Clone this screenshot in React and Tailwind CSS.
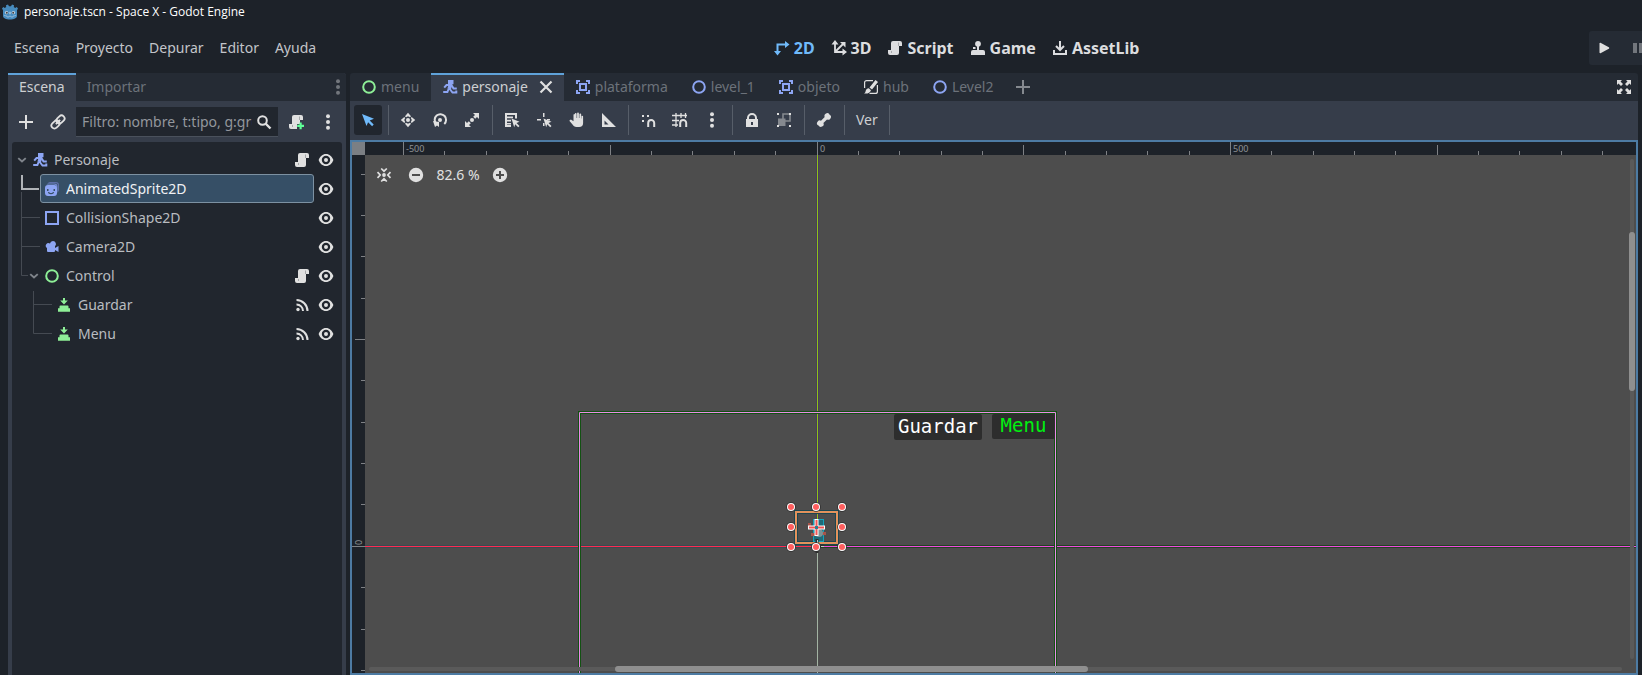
import React from "react";

function Icon({ children, className = "", size = 16 }) {
  return (
    <svg
      width={size}
      height={size}
      viewBox="0 0 16 16"
      fill="currentColor"
      aria-hidden="true"
      className={"block shrink-0 " + className}
    >
      {children}
    </svg>
  );
}

const S = { fill: "none", stroke: "currentColor", strokeWidth: 2 };

const Body = () => (
  <Icon className="text-[#8da5f3]">
    <path d="M6 1h5.500v4.200H6z" />
    <path d="M8.800 4.500L7.200 10" {...S} strokeWidth="3.600" />
    <path d="M8 6H4.500L2.200 8.600M9.500 6.200l2 3.200h3.300M6.800 9.500L5.400 13H1.200M7.800 10l2.700 3.500h3.800v-2" {...S} />
  </Icon>
);
const Sprite = () => (
  <Icon>
    <path d="M6 1h6a3 3 0 0 1 3 3v5a3 3 0 0 1-1 2V5a3 3 0 0 0-3-3H4a3 3 0 0 1 2-1z" fill="#5f6fa8" />
    <path d="M4 2.500h6.500a3 3 0 0 1 3 3V11l-1 1.500V6.500a3 3 0 0 0-3-3H2.500A3 3 0 0 1 4 2.500z" fill="#7288cc" />
    <path
      fillRule="evenodd"
      fill="#8da5f3"
      d="M4 4h6a3 3 0 0 1 3 3v5a3 3 0 0 1-3 3H4a3 3 0 0 1-3-3V7a3 3 0 0 1 3-3zM3 8v2h1.500V8zm6.500 0v2H11V8zM4 11c0 1.500 1.500 2.200 3 2.200s3-.7 3-2.200H8.800c0 .8-.8 1-1.800 1s-1.800-.2-1.800-1z"
    />
  </Icon>
);
const Shape = () => (
  <Icon className="text-[#8da5f3]">
    <path d="M2 2h12v12H2z" {...S} />
  </Icon>
);
const Camera = () => (
  <Icon className="text-[#8da5f3]">
    <path d="M9 2a3 3 0 0 0-3 2.500A2.500 2.500 0 1 0 3 9v3a1 1 0 0 0 1 1h6a1 1 0 0 0 1-1v-1l3.500 2V7L11 9V7.200A3 3 0 0 0 9 2z" />
  </Icon>
);
const Ring = ({ className }) => (
  <Icon className={className}>
    <circle cx="8" cy="8" r="5.800" {...S} />
  </Icon>
);
const ButtonNode = () => (
  <Icon className="text-[#8eef97]">
    <path d="M7 1h2v2.500h2.800L8 7.500 4.200 3.500H7zM4.500 8.500h7a1 1 0 0 1 1 1v1.800h-9V9.500a1 1 0 0 1 1-1zM2 11.300h12v3.500H2z" />
  </Icon>
);
const Script = () => (
  <Icon>
    <path d="M6 1a2 2 0 0 0-2 2v7H1v3a2 2 0 0 0 2 2h7a2 2 0 0 0 2-2V6h3V3a2 2 0 0 0-2-2z" />
    <path d="M11.500 2.500V6M4.500 11v2" fill="none" stroke="#a6a8ab" strokeWidth="1" />
  </Icon>
);
const ScriptAdd = () => (
  <Icon>
    <path d="M6 1a2 2 0 0 0-2 2v7H1v3a2 2 0 0 0 2 2h6v-5h3V6h3V3a2 2 0 0 0-2-2z" />
    <path d="M11.500 2.500V6M4.500 11v2" fill="none" stroke="#a6a8ab" strokeWidth="1" />
    <path d="M11.500 8.500h2.200v2.300H16v2.200h-2.300v2.300h-2.200V13H9.200v-2.200h2.300z" fill="#5fff97" />
  </Icon>
);
const Eye = () => (
  <Icon>
    <path
      fillRule="evenodd"
      d="M8 2C4.500 2 2 4.500.8 7.500a1.400 1.400 0 0 0 0 1C2 11.500 4.500 14 8 14s6-2.500 7.200-5.500a1.400 1.400 0 0 0 0-1C14 4.500 11.500 2 8 2zm0 1.800a4.200 4.200 0 1 1 0 8.400 4.200 4.200 0 0 1 0-8.400zm0 2.200a2 2 0 1 0 0 4 2 2 0 0 0 0-4z"
    />
  </Icon>
);
const Signal = () => (
  <Icon>
    <circle cx="4" cy="12.500" r="1.700" />
    <path d="M2.500 7.500a6.500 6.500 0 0 1 6.500 6.500M2.500 3a11 11 0 0 1 11 11" {...S} />
  </Icon>
);
const Dots = () => (
  <Icon>
    <circle cx="8" cy="2.300" r="2" />
    <circle cx="8" cy="8" r="2" />
    <circle cx="8" cy="13.700" r="2" />
  </Icon>
);
const Plus = () => (
  <Icon>
    <path d="M8 1v14M1 8h14" {...S} />
  </Icon>
);
const Link = () => (
  <Icon>
    <g transform="rotate(-45 8 8)" {...S} strokeWidth="1.800">
      <rect x="0" y="5" width="9" height="6" rx="3" />
      <rect x="7" y="5" width="9" height="6" rx="3" />
      <path d="M5 8h6" />
    </g>
  </Icon>
);
const Search = () => (
  <Icon>
    <circle cx="6.500" cy="6.500" r="4.300" {...S} />
    <path d="M9.500 9.500l5 5" {...S} strokeWidth="2.400" />
  </Icon>
);
const Chevron = () => (
  <Icon size={12}>
    <path d="M3 5.500l5 4.500 5-4.500" {...S} strokeWidth="2.600" />
  </Icon>
);
const Instance = () => (
  <Icon className="text-[#8da5f3]">
    <path d="M1 1h4v2H3v2H1zM11 1h4v4h-2V3h-2zM1 11h2v2h2v2H1zM13 11h2v4h-4v-2h2z" />
    <path d="M5 5h6v6H5z" {...S} />
  </Icon>
);
const CanvasLayer = () => (
  <Icon className="text-[#e0e0e0]">
    <path d="M10 1.600H3.600a2 2 0 0 0-2 2V9M14.400 6v6.400a2 2 0 0 1-2 2H6.500" fill="none" stroke="currentColor" strokeWidth="1.200" />
    <path d="M12.500 1L15 3l-6 7.500-2.500-2zM5.800 9.300L8 11.200c-1 2.800-3.500 3.800-7 3.300 1.200-.6 1.400-1.500 1.700-2.800.4-1.600 1.700-2.500 3.100-2.400z" />
  </Icon>
);
const Close = () => (
  <Icon>
    <path d="M2.500 2.500l11 11M13.500 2.500l-11 11" {...S} strokeWidth="2.200" />
  </Icon>
);
const Expand = () => (
  <Icon>
    <path d="M1 1h5L4.500 2.500l2.500 2.500-2 2-2.500-2.500L1 6zM15 1v5l-1.500-1.500L11 7 9 5l2.500-2.500L10 1zM1 15v-5l1.500 1.500L5 9l2 2-2.500 2.500L6 15zM15 15h-5l1.500-1.500L9 11l2-2 2.500 2.500L15 10z" />
  </Icon>
);
const Axis2D = () => (
  <Icon>
    <path d="M3.500 12V4.500H12" {...S} />
    <path d="M11 1l4.500 3.500L11 8zM0 11h7l-3.500 4.500z" />
  </Icon>
);
const Axis3D = () => (
  <Icon>
    <path d="M4 4v8h8M4 12l8-8" {...S} strokeWidth="1.800" />
    <path d="M4 0l3.500 4.500h-7zM16 12l-4.500 3.500v-7zM9 2h5.500v5.500z" />
  </Icon>
);
const Game = () => (
  <Icon>
    <circle cx="8" cy="3.800" r="2.900" />
    <path d="M7 6h2v4H7zM3 7h2.500v2H3zM3 10h10a2 2 0 0 1 2 2v3H1v-3a2 2 0 0 1 2-2z" />
  </Icon>
);
const AssetLib = () => (
  <Icon>
    <path d="M8 1v8M4 6l4 4 4-4M2 10v4h12v-4" {...S} />
  </Icon>
);
const Select = () => (
  <Icon className="text-[#70bafa]">
    <path d="M2 2l12 4.800-4.300 1.800 4 4-1.600 1.600-4-4L6.500 14z" />
  </Icon>
);
const Move = () => (
  <Icon>
    <circle cx="8" cy="8" r="2" />
    <path d="M8 .8l3 3.500-1 .9L8 4.200l-2 1-1-.9zM8 15.200l3-3.500-1-.9-2 1-2-1-1 .9zM.8 8l3.500-3 .9 1-1 2 1 2-.9 1zM15.200 8l-3.500-3-.9 1 1 2-1 2 .9 1z" />
  </Icon>
);
const Rotate = () => (
  <Icon>
    <circle cx="8" cy="8" r="2" />
    <path d="M4 11.500A5.700 5.700 0 1 1 12.300 12" {...S} />
    <path d="M1 9l6 1v5l-2-1.500L3 15z" />
  </Icon>
);
const Scale = () => (
  <Icon>
    <circle cx="8" cy="8" r="2" />
    <path d="M9 1h6v6l-2-2-1.800 1.800-2-2L11 3zM1 9l2 2 1.800-1.800 2 2L5 13l2 2H1z" />
  </Icon>
);
const ListSelect = () => (
  <Icon>
    <path d="M1 1h12v5.500h-2V3H3v1.500h6v1.700H3v1.500h4v1.700H3v1.500h4v1.700H3V13h4v2H1z" />
    <path d="M7.500 6.500l8 3.300-3 1.200 3 3-1.300 1.300-3-3-1 3z" />
  </Icon>
);
const Pivot = () => (
  <Icon>
    <path d="M7 1h1.500v4H7zM1 7h4v1.500H1zM11 7h3v1.500h-3zM7 11h1.500v3H7z" />
    <path d="M7.500 6.500l8 3.300-3 1.200 3 3-1.300 1.300-3-3-1 3z" />
  </Icon>
);
const Hand = () => (
  <Icon>
    <path d="M6.800 2a.9.900 0 0 1 1.800 0v4h.5V1.500a.9.900 0 0 1 1.800 0V6h.5V2.500a.9.900 0 0 1 1.800 0V6.500h.3V4.500a.8.800 0 0 1 1.600 0V11a4 4 0 0 1-4 4H8.500c-2 0-3-1-4-2.500L1.500 9c0-1.500 1.500-1.500 2.500-.8l1.500 1V3a.7.700 0 0 1 1.300-.5z" />
  </Icon>
);
const Ruler = () => (
  <Icon>
    <path fillRule="evenodd" d="M2 1v14h14zM4.500 8.500l4 4h-4z" />
  </Icon>
);
const Magnet = () => <path d="M8.200 15v-4a3 3 0 0 1 6 0v4" {...S} />;
const Snap = () => (
  <Icon>
    <path d="M2 3h2v2H2zM7 3h2v2H7zM2 8h2v2H2z" />
    <Magnet />
  </Icon>
);
const Grid = () => (
  <Icon>
    <path d="M0 3.500h15M0 8.500h7M4 1v14M9 1v5M13.500 1v5M0 13h6" fill="none" stroke="currentColor" strokeWidth="1.300" />
    <Magnet />
  </Icon>
);
const Lock = () => (
  <Icon>
    <path fillRule="evenodd" d="M8 1a5 5 0 0 0-5 5v1H2v8h12V7h-1V6a5 5 0 0 0-5-5zm0 2a3 3 0 0 1 3 3v1H5V6a3 3 0 0 1 3-3zM7 10h2v3H7z" />
  </Icon>
);
const Group = () => (
  <Icon>
    <path fill="#85898f" d="M2 6.500h7.500V14H2z" />
    <path fill="none" stroke="#85898f" strokeWidth="1.600" d="M7 2h7v7H7z" />
    <path d="M1 1h2v2H1zM13 1h2v2h-2zM1 13h2v2H1zM13 13h2v2h-2z" />
  </Icon>
);
const Bone = () => (
  <Icon>
    <path d="M10 1.500a2.600 2.600 0 0 1 3.400.9 2.600 2.600 0 0 1 1.200 3.800A2.700 2.700 0 0 1 11 7.400L7.400 11a2.700 2.700 0 0 1-1.300 3.600 2.600 2.600 0 0 1-3.600-1 2.600 2.600 0 0 1-1.100-3.700A2.700 2.700 0 0 1 5 8.700L8.700 5A2.700 2.700 0 0 1 10 1.500z" />
  </Icon>
);
const Center = () => (
  <Icon>
    <circle cx="8" cy="8" r="1.900" />
    <path d="M5.200 1.500L8 4.200l2.800-2.700M5.200 14.500L8 11.800l2.800 2.700M1.500 5.200L4.200 8l-2.700 2.800M14.500 5.200L11.800 8l2.700 2.800" fill="none" stroke="currentColor" strokeWidth="1.700" />
  </Icon>
);
const ZoomOut = () => (
  <Icon>
    <path fillRule="evenodd" d="M8 .8a7.200 7.200 0 1 0 0 14.400A7.200 7.200 0 0 0 8 .8zM4 7h8v2H4z" />
  </Icon>
);
const ZoomIn = () => (
  <Icon>
    <path fillRule="evenodd" d="M8 .8a7.200 7.200 0 1 0 0 14.400A7.200 7.200 0 0 0 8 .8zM7 4h2v3h3v2H9v3H7V9H4V7h3z" />
  </Icon>
);
const Logo = () => (
  <Icon>
    <path fill="#478cbf" d="M6 .5l1 1.700h2l1-1.700 2 .8-.2 1.700 1.400 1 1.500-1L16 4.500l-1 1.800V12c0 2-3 3.500-7 3.500S1 14 1 12V6.300L0 4.500 1.300 3l1.500 1 1.400-1L4 1.300z" />
    <circle cx="4.600" cy="8.600" r="1.700" fill="#c9dbe9" />
    <circle cx="11.400" cy="8.600" r="1.700" fill="#c9dbe9" />
    <circle cx="4.800" cy="8.700" r="1" fill="#414042" />
    <circle cx="11.200" cy="8.700" r="1" fill="#414042" />
    <path d="M7.500 8h1v2h-1zM2 11.500l3 .5v1h2v-.8h2v.8h2v-1l3-.5" stroke="#b5cfe3" strokeWidth=".6" fill="none" />
  </Icon>
);

const menus = ["Escena", "Proyecto", "Depurar", "Editor", "Ayuda"];

const workspaces = [
  { label: "2D", icon: <Axis2D />, active: true },
  { label: "3D", icon: <Axis3D /> },
  { label: "Script", icon: <Script /> },
  { label: "Game", icon: <Game /> },
  { label: "AssetLib", icon: <AssetLib /> },
];

const sceneTabs = [
  { label: "menu", icon: <Ring className="text-[#8eef97]" /> },
  { label: "personaje", icon: <Body />, active: true },
  { label: "plataforma", icon: <Instance /> },
  { label: "level_1", icon: <Ring className="text-[#8da5f3]" /> },
  { label: "objeto", icon: <Instance /> },
  { label: "hub", icon: <CanvasLayer /> },
  { label: "Level2", icon: <Ring className="text-[#8da5f3]" /> },
];

const tree = [
  { label: "Personaje", icon: <Body />, indent: "pl-1", fold: true, extra: "script" },
  { label: "AnimatedSprite2D", icon: <Sprite />, indent: "pl-7", selected: true },
  { label: "CollisionShape2D", icon: <Shape />, indent: "pl-7" },
  { label: "Camera2D", icon: <Camera />, indent: "pl-7" },
  { label: "Control", icon: <Ring className="text-[#8eef97]" />, indent: "pl-4", fold: true, extra: "script" },
  { label: "Guardar", icon: <ButtonNode />, indent: "pl-10", extra: "signal" },
  { label: "Menu", icon: <ButtonNode />, indent: "pl-10", extra: "signal" },
];

const toolGroups = [
  [["Seleccionar", <Select />]],
  [["Mover", <Move />], ["Rotar", <Rotate />], ["Escalar", <Scale />]],
  [["Lista", <ListSelect />], ["Pivote", <Pivot />], ["Desplazar", <Hand />], ["Regla", <Ruler />]],
  [["Ajuste inteligente", <Snap />], ["Ajuste a cuadrícula", <Grid />], ["Opciones de ajuste", <Dots />]],
  [["Bloquear", <Lock />], ["Agrupar", <Group />]],
  [["Esqueleto", <Bone />]],
];

function TopBar() {
  return (
    <div className="flex h-[49px] items-center justify-between overflow-hidden pb-[2px]">
      <nav className="flex pl-[6px]">
        {menus.map((m) => (
          <button key={m} className="px-2 whitespace-nowrap">
            {m}
          </button>
        ))}
      </nav>
      <nav className="flex text-[16px] font-bold">
        {workspaces.map((w) => (
          <button
            key={w.label}
            className={
              "flex items-center gap-1 px-2 " + (w.active ? "text-[#70bafa]" : "text-[#dcdddf]")
            }
          >
            {w.icon}
            {w.label}
          </button>
        ))}
      </nav>
      <div className="flex h-[34px] w-[53px] items-center gap-[20px] overflow-hidden rounded-l-[3px] bg-[#252b34] pl-[7px]">
        <button aria-label="Reproducir" className="text-[#e0e0e0]">
          <Icon>
            <path d="M3.500 3.500v9a.8.800 0 0 0 1 .7l8.300-4.500a.8.800 0 0 0 0-1.400L4.500 2.800a.8.800 0 0 0-1 .7z" />
          </Icon>
        </button>
        <button aria-label="Pausa" className="text-[#72767c]">
          <Icon>
            <path d="M1 3h4v10H1zM7 3h4v10H7z" />
          </Icon>
        </button>
      </div>
    </div>
  );
}

function TreeRow({ node }) {
  return (
    <li className={"flex h-[29px] items-center pr-2 " + node.indent}>
      {node.fold && (
        <button aria-label="Plegar" className="text-[#7f848b]">
          <Chevron />
        </button>
      )}
      <button
        className={
          "flex h-[29px] flex-1 items-center gap-[6px] rounded-[3px] border pl-[3px] text-left " +
          (node.selected
            ? "border-[#7d91a2] bg-[#364f66] text-[#f0f2f4]"
            : "border-transparent text-[#b9bcc0]")
        }
      >
        {node.icon}
        {node.label}
      </button>
      <div className="flex items-center gap-2 pl-[4px] text-[#e0e0e0]">
        {node.extra === "script" && (
          <button aria-label="Abrir script">
            <Script />
          </button>
        )}
        {node.extra === "signal" && (
          <button aria-label="Señales">
            <Signal />
          </button>
        )}
        <button aria-label="Visibilidad">
          <Eye />
        </button>
      </div>
    </li>
  );
}

function ScenePanel() {
  return (
    <aside className="flex w-[338px] shrink-0 flex-col rounded-t-[3px] bg-[#363d4a]">
      <div className="flex h-7 items-stretch rounded-t-[3px] bg-[#252b34]">
        <button className="border-t-2 border-[#5fa2d9] bg-[#363d4a] px-[11px] pb-[2px] text-[#cdcfd2]">Escena</button>
        <button className="px-[11px] text-[#6c727a]">Importar</button>
        <button aria-label="Opciones del panel" className="ml-auto text-[#72767c]">
          <Dots />
        </button>
      </div>
      <div className="flex items-center gap-[10px] px-[10px] pt-[6px] pb-[5px] text-[#e0e0e0]">
        <div className="flex items-center gap-4">
          <button aria-label="Añadir nodo">
            <Plus />
          </button>
          <button aria-label="Instanciar escena">
            <Link />
          </button>
        </div>
        <label className="flex h-[30px] min-w-0 flex-1 items-center gap-1 border-b border-[#4a515c] bg-[#21262e] px-[6px]">
          <input
            aria-label="Filtrar nodos"
            placeholder="Filtro: nombre, t:tipo, g:grupo"
            className="min-w-0 flex-1 bg-transparent outline-none placeholder:text-[#93979d]"
          />
          <Search />
        </label>
        <div className="flex items-center gap-4">
          <button aria-label="Añadir script">
            <ScriptAdd />
          </button>
          <button aria-label="Más opciones">
            <Dots />
          </button>
        </div>
      </div>
      <div className="relative mx-1 flex-1 rounded-t-[3px] bg-[#21262e] pt-[3px]">
        <svg className="pointer-events-none absolute top-0 left-0 h-[210px] w-[60px]" aria-hidden="true">
          <path d="M9.500 50V133.500H16M9.500 75.500H28M9.500 104.500H28M21.500 149V191.500H40M21.500 162.500H40" fill="none" stroke="#454a52" />
          <path d="M10 33V47H27" fill="none" stroke="#b0b3b7" strokeWidth="2" />
        </svg>
        <ul>
          {tree.map((n) => (
            <TreeRow key={n.label} node={n} />
          ))}
        </ul>
      </div>
    </aside>
  );
}

function SceneTabs() {
  return (
    <div className="flex h-7 items-stretch rounded-t-[3px] bg-[#252b34]">
      {sceneTabs.map((t) => (
        <div
          key={t.label}
          className={
            "flex items-center " +
            (t.active
              ? "border-t-2 border-[#5fa2d9] bg-[#363d4a] pb-[2px] text-[#cdcfd2]"
              : "text-[#6c727a]")
          }
        >
          <button className={"flex items-center gap-1 pl-[11px] " + (t.active ? "pr-[10px]" : "pr-3")}>
            {t.icon}
            {t.label}
          </button>
          {t.active && (
            <button aria-label="Cerrar pestaña" className="pr-[10px] text-[#e0e0e0]">
              <Close />
            </button>
          )}
        </div>
      ))}
      <button aria-label="Nueva escena" className="pl-[9px] text-[#85898f]">
        <Plus />
      </button>
      <button aria-label="Modo sin distracciones" className="mr-[6px] ml-auto text-[#e0e0e0]">
        <Expand />
      </button>
    </div>
  );
}

const Separator = () => (
  <div className="flex w-1 justify-center">
    <div className="h-[30px] w-px bg-[#575e69]" />
  </div>
);

function ToolBar() {
  return (
    <div className="flex h-[39px] items-center gap-1 bg-[#363d4a] pb-px pl-1 text-[#e0e0e0]">
      {toolGroups.map((group, i) => (
        <React.Fragment key={i}>
          {group.map(([label, icon]) => (
            <button
              key={label}
              aria-label={label}
              className={
                "flex h-[30px] w-7 items-center justify-center rounded-[3px] " +
                (i === 0 ? "bg-[#21262e]" : "")
              }
            >
              {icon}
            </button>
          ))}
          <Separator />
        </React.Fragment>
      ))}
      <button className="px-[6px] text-[#cdcfd2]">Ver</button>
      <Separator />
    </div>
  );
}

const STEP = 41.35;

function TopRuler() {
  const ticks = [];
  for (let k = -10; k <= 40; k++) ticks.push(k);
  return (
    <svg className="block h-[13px] w-full bg-[#1d2229]" aria-hidden="true">
      {ticks.map((k) => {
        const x = Math.floor(452 + k * STEP);
        const h = k % 10 === 0 ? 13 : k % 5 === 0 ? 10 : 4;
        return <rect key={k} x={x} y={13 - h} width="1" height={h} fill="#7e8185" />;
      })}
      {[-500, 0, 500].map((v) => (
        <text key={v} x={Math.floor(455 + (v / 50) * STEP)} y="10" className="fill-[#8f9296] text-[9px]">
          {v}
        </text>
      ))}
    </svg>
  );
}

function SideRuler() {
  const ticks = [];
  for (let k = -9; k <= 20; k++) ticks.push(k);
  return (
    <svg className="block h-full w-[13px] bg-[#1d2229]" aria-hidden="true">
      {ticks.map((k) => {
        const y = Math.floor(391.3 + k * STEP);
        const w = k % 10 === 0 ? 13 : k % 5 === 0 ? 10 : 4;
        return <rect key={k} x={13 - w} y={y} width={w} height="1" fill="#7e8185" />;
      })}
      <text transform="translate(10 390) rotate(-90)" className="fill-[#8f9296] text-[9px]">
        0
      </text>
    </svg>
  );
}

function Handles() {
  const pts = [];
  [426, 451, 477].forEach((x) =>
    [352, 372, 392].forEach((y) => {
      if (!(x === 451 && y === 372)) pts.push([x, y]);
    })
  );
  return pts.map(([x, y]) => (
    <g key={x + "-" + y}>
      <circle cx={x} cy={y} r="4.800" fill="#2e2e2e" />
      <circle cx={x} cy={y} r="4" fill="#fff" />
      <circle cx={x} cy={y} r="3" fill="#ff5f5f" />
    </g>
  ));
}

function Viewport() {
  return (
    <div className="relative min-h-0 min-w-0 overflow-hidden bg-[#4d4d4d]">
      <svg className="absolute inset-0 h-full w-full" aria-hidden="true">
        <rect x="0" y="390" width="452" height="3" fill="#3b4a50" />
        <rect x="452" y="390" width="100%" height="3" fill="#234223" />
        <rect x="451" y="0" width="3" height="391" fill="#473f5a" />
        <rect x="0" y="391" width="452" height="1" fill="#ff2b52" />
        <rect x="452" y="391" width="100%" height="1" fill="#f04be0" />
        <rect x="452" y="0" width="1" height="391" fill="#8fc218" />
        <rect x="452" y="391" width="1" height="2000" fill="#a3b3a3" />
        <path d="M214.500 2000V257.500H690.500V2000" fill="none" stroke="#125212" strokeWidth="3" />
        <path d="M214.500 2000V257.500H690.500V2000" fill="none" stroke="#e98ae6" />
        <rect x="431" y="357" width="41" height="31" fill="none" stroke="#1d4650" strokeWidth="4" />
        <rect x="431" y="357" width="41" height="31" fill="none" stroke="#e2925c" strokeWidth="2" />
        <rect x="448.500" y="364.500" width="10" height="22" fill="#1f6a78" stroke="#12a3bd" />
        <path d="M443 368h3v4h-3zM446 378h4v3h-4zM457 377h4v3h-4z" fill="#a8544a" />
        <circle cx="454" cy="378" r="4" fill="#7d9396" />
        <path d="M452 384v14M455 391h6" stroke="#2e2e2e" strokeWidth="3" strokeDasharray="4 2" />
        <path d="M452.500 385v12M456 391.500h4" stroke="#c5c9c5" strokeDasharray="3 3" />
        <path d="M443 372.500h17M451.500 364v17" stroke="#fff" strokeWidth="4" />
        <path d="M444 372.500h15M451.500 365v15" stroke="#f25555" strokeWidth="2" />
        <rect x="450" y="371" width="3" height="3" fill="#2b7f90" />
        <Handles />
      </svg>

      <button className="absolute top-[259px] left-[529px] flex h-[26px] w-[88px] items-center justify-center rounded-[2px] bg-[#2d2d2d] pb-[2px] font-['DejaVu_Sans_Mono',monospace] text-[19px] leading-none text-white">
        Guardar
      </button>
      <button className="absolute top-[259px] left-[627px] flex h-[25px] w-[63px] items-center justify-center rounded-[2px] bg-[#2d2d2d] pb-[2px] font-['DejaVu_Sans_Mono',monospace] text-[19px] leading-none text-[#00f010]">
        Menu
      </button>

      <div className="absolute top-[10px] left-[11px] flex items-center gap-4 text-[#e0e0e0]">
        <button aria-label="Centrar vista">
          <Center />
        </button>
        <button aria-label="Alejar">
          <ZoomOut />
        </button>
        <button className="-mx-1 w-[44px] whitespace-nowrap">82.6 %</button>
        <button aria-label="Acercar">
          <ZoomIn />
        </button>
      </div>

      <div className="absolute right-[14px] bottom-[2px] left-1 h-1 rounded-full bg-[#5a5a5a]" />
      <div className="absolute bottom-px left-[250px] h-[6px] w-[473px] rounded-[3px] bg-[#8f8f8f]" />
      <div className="absolute top-1 right-[2px] bottom-[14px] w-1 rounded-full bg-[#5a5a5a]" />
      <div className="absolute top-[77px] right-px h-[159px] w-[6px] rounded-[3px] bg-[#8f8f8f]" />
    </div>
  );
}

export default function App() {
  return (
    <div className="flex min-h-screen flex-col bg-[#1d2229] font-['Noto_Sans',sans-serif] text-[14px] leading-5 text-[#c3c5c9]">
      <header className="flex h-6 items-center gap-[6px] pl-[2px] font-['Open_Sans',sans-serif] text-[12px] text-white">
        <Logo />
        <h1>personaje.tscn - Space X - Godot Engine</h1>
      </header>
      <TopBar />
      <div className="flex min-h-0 flex-1 gap-1 pr-1 pl-2">
        <ScenePanel />
        <main className="flex min-w-0 flex-1 flex-col">
          <SceneTabs />
          <ToolBar />
          <div className="grid flex-1 grid-cols-[13px_minmax(0,1fr)] grid-rows-[13px_minmax(0,1fr)] border-2 border-[#4d7ba3]">
            <div className="bg-[#7b7f84]" />
            <TopRuler />
            <SideRuler />
            <Viewport />
          </div>
        </main>
      </div>
    </div>
  );
}
